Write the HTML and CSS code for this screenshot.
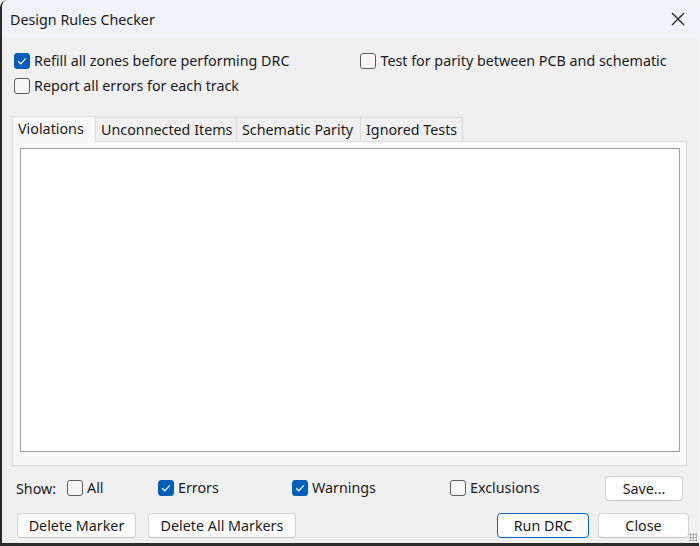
FILE: index.html
```html
<!DOCTYPE html>
<html>
<head>
<meta charset="utf-8">
<link rel="stylesheet" href="styles.css">
</head>
<body>
<div class="window">
  <div class="titlebar">
    <span class="title">Design Rules Checker</span>
    <svg class="close-x" width="14" height="14" viewBox="0 0 14 14"><path d="M1 1 L13 13 M13 1 L1 13" stroke="#1a1a1a" stroke-width="1.1" fill="none"/></svg>
  </div>
  <div class="content">
    <div class="options">
      <div class="opt-col">
        <label class="cb"><span class="box checked"><svg viewBox="0 0 16 16" width="16" height="16"><path d="M4.2 8.3 L6.8 10.8 L11.8 5.4" stroke="#fff" stroke-width="1.2" fill="none"/></svg></span>Refill all zones before performing DRC</label>
        <label class="cb"><span class="box"></span>Report all errors for each track</label>
      </div>
      <div class="opt-col right">
        <label class="cb"><span class="box"></span>Test for parity between PCB and schematic</label>
      </div>
    </div>
    <div class="tabs">
      <div class="tab active t1">Violations</div>
      <div class="tab t2">Unconnected Items</div>
      <div class="tab t3">Schematic Parity</div>
      <div class="tab t4">Ignored Tests</div>
    </div>
    <div class="panel">
      <div class="list"></div>
    </div>
    <div class="show-row">
      <span class="show-label">Show:</span>
      <label class="cb w-all"><span class="box"></span>All</label>
      <label class="cb w-err"><span class="box checked"><svg viewBox="0 0 16 16" width="16" height="16"><path d="M4.2 8.3 L6.8 10.8 L11.8 5.4" stroke="#fff" stroke-width="1.2" fill="none"/></svg></span>Errors</label>
      <label class="cb w-warn"><span class="box checked"><svg viewBox="0 0 16 16" width="16" height="16"><path d="M4.2 8.3 L6.8 10.8 L11.8 5.4" stroke="#fff" stroke-width="1.2" fill="none"/></svg></span>Warnings</label>
      <label class="cb w-exc"><span class="box"></span>Exclusions</label>
      <button class="btn save">Save...</button>
    </div>
    <div class="btn-row">
      <button class="btn b-del">Delete Marker</button>
      <button class="btn b-delall">Delete All Markers</button>
      <span class="spacer"></span>
      <button class="btn primary b-run">Run DRC</button>
      <button class="btn b-close">Close</button>
    </div>
    <div class="grip"></div>
  </div>
</div>
</body>
</html>
```

FILE: styles.css
```css
html, body {
  margin: 0;
  padding: 0;
}
body {
  width: 700px;
  height: 546px;
  background: #f3f3f3;
  font-family: "Noto Sans", "Open Sans", sans-serif;
  font-size: 14.3px;
  color: #1b1b1b;
  overflow: hidden;
}
.window {
  box-sizing: border-box;
  width: 699px;
  height: 546px;
  border-left: 2px solid #2a2a2a;
  border-bottom: 3px solid #2a2a2a;
  border-top-left-radius: 8px;
  border-top-right-radius: 8px;
  background: #f0f0f0;
  overflow: hidden;
  display: flex;
  flex-direction: column;
}
.titlebar {
  height: 38px;
  flex: none;
  display: flex;
  align-items: center;
  justify-content: space-between;
  padding: 0 10px 0 8px;
  background: #eff3f8;
}
.title {
  font-size: 14.3px;
  color: #1a1a1a;
}
.close-x {
  margin-right: 4px;
}
.content {
  position: relative;
  flex: 1;
  padding: 15px 12px 0 8px;
}
.options {
  display: flex;
  height: 63px;
}
.opt-col {
  display: flex;
  flex-direction: column;
  gap: 9px;
}
.opt-col.right {
  margin-left: 67px;
}
.cb {
  display: flex;
  align-items: center;
  height: 16px;
  line-height: 16px;
  white-space: nowrap;
}
.box {
  box-sizing: border-box;
  width: 16px;
  height: 16px;
  border: 1px solid #5c5c5c;
  border-radius: 3px;
  background: #f7f7f7;
  margin-right: 4px;
  flex: none;
  display: flex;
}
.box.checked {
  background: #005fb8;
  border-color: #005fb8;
}
.box svg {
  margin: -1px;
}
.options .cb {
  margin-left: 4px;
}
.tabs {
  display: flex;
  margin-left: 2px;
  height: 25px;
  align-items: flex-end;
}
.tab {
  box-sizing: border-box;
  height: 24px;
  padding: 0 5px;
  line-height: 23px;
  border: 1px solid #dcdcdc;
  border-bottom: none;
  border-left: none;
  background: #f0f0f0;
  white-space: nowrap;
  flex: none;
}
.t1 { width: 84px; }
.t2 { width: 141px; }
.t3 { width: 124px; }
.t4 { width: 102px; }
.tab:first-of-type {
  border-left: 1px solid #dcdcdc;
}
.tab.active {
  height: 26px;
  background: #f9f9f9;
  line-height: 24px;
  margin-bottom: -1px;
  position: relative;
  z-index: 1;
}
.panel {
  box-sizing: border-box;
  margin-left: 2px;
  width: 675px;
  height: 325px;
  background: #f9f9f9;
  border: 1px solid #dcdcdc;
  padding: 6px 6px 14px 7px;
}
.list {
  box-sizing: border-box;
  width: 660px;
  height: 304px;
  background: #fff;
  border: 1px solid #a0a0a0;
}
.show-row {
  display: flex;
  align-items: center;
  height: 26px;
  margin-top: 9px;
}
.show-label {
  margin-left: 6px;
  width: 51px;
}
.w-all { width: 91px; }
.w-err { width: 134px; }
.w-warn { width: 158px; }
.w-exc { width: 155px; }
.btn {
  box-sizing: border-box;
  font-family: inherit;
  font-size: 14.3px;
  color: #1b1b1b;
  height: 25px;
  background: #fdfdfd;
  border: 1px solid #d5d5d5;
  border-bottom-color: #c4c4c4;
  border-radius: 4px;
  padding: 0 8px;
}
.save {
  width: 78px;
}
.btn-row {
  display: flex;
  align-items: center;
  margin-top: 12px;
  padding-left: 7px;
}
.b-del { width: 119px; }
.b-delall { width: 148px; margin-left: 12px; }
.spacer { flex: 1; }
.b-run { width: 92px; }
.primary {
  border: 1px solid #0067c0;
  background: #fdfdfd;
}
.b-close { width: 91px; margin-left: 9px; margin-right: -2px; }
.grip {
  position: absolute;
  right: 2px;
  bottom: 2px;
  width: 8px;
  height: 8px;
  background-image: radial-gradient(circle, #b0b0b0 1px, transparent 1.2px);
  background-size: 3px 3px;
}
```
